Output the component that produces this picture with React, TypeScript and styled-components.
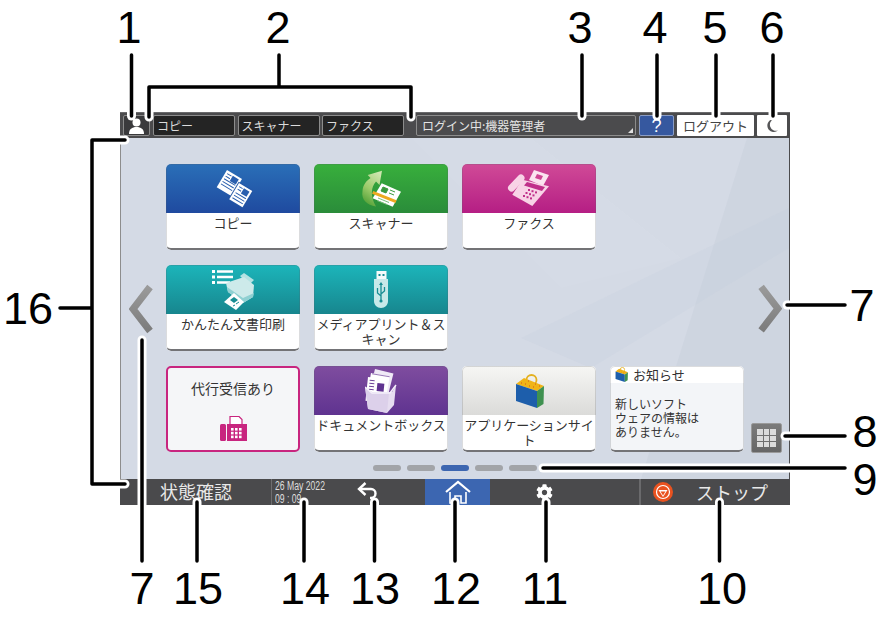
import React from "react";
import styled, { createGlobalStyle } from "styled-components";
import { FaCog } from "react-icons/fa";

const CJK = `"Noto Sans CJK JP", "Noto Sans", sans-serif`;

const Global = createGlobalStyle`
  html, body { margin: 0; padding: 0; background: #fff; }
  body { font-family: ${CJK}; }
`;

const Stage = styled.div`
  position: relative;
  width: 885px;
  height: 621px;
  overflow: hidden;
  background: #fff;
  padding: 112px 0 0 120px;
  box-sizing: border-box;
`;

const Screen = styled.div`
  width: 670px;
  height: 393px;
  display: flex;
  flex-direction: column;
`;

const TopBar = styled.div`
  height: 26px;
  flex: none;
  background: #4b4b4d;
  border-top: 1px solid #6a6a6c;
  box-sizing: border-box;
  padding: 2px 3px 2px 3px;
  display: flex;
  align-items: stretch;
`;

const UserBox = styled.div`
  width: 27px;
  box-sizing: border-box;
  background: #3a3a3c;
  border: 1px solid #8a8a8a;
  border-radius: 2px;
  display: flex;
  align-items: center;
  justify-content: center;
  margin-right: 3px;
`;

const Tab = styled.div`
  width: 82px;
  box-sizing: border-box;
  margin-right: 2.5px;
  background: #242424;
  border: 1px solid #8c8c8c;
  border-radius: 2px;
  color: #dcdcdc;
  font-size: 12px;
  line-height: 19px;
  padding-left: 3px;
`;

const Login = styled.div`
  position: relative;
  width: 220px;
  margin-left: 9.5px;
  margin-right: 3px;
  box-sizing: border-box;
  background: #4b4b4d;
  border: 1px solid #8c8c8c;
  border-radius: 2px;
  color: #e4e4e4;
  font-size: 12px;
  line-height: 19px;
  padding-left: 5px;
  &::after {
    content: "";
    position: absolute;
    right: 2px;
    bottom: 2px;
    border-style: solid;
    border-width: 0 0 5px 5px;
    border-color: transparent transparent #e0e0e0 transparent;
  }
`;

const Help = styled.div`
  width: 35px;
  margin-right: 3px;
  box-sizing: border-box;
  background: #36589f;
  border: 1px solid #8a9cc4;
  border-radius: 2px;
  color: #fff;
  font: 18px/20px "Liberation Sans", sans-serif;
  text-align: center;
`;

const Logout = styled.div`
  width: 77px;
  margin-right: 3px;
  background: #fff;
  color: #444;
  font-size: 13px;
  line-height: 21px;
  text-align: center;
  border-radius: 1px;
`;

const Moon = styled.div`
  width: 30px;
  background: #fff;
  border-radius: 1px;
  display: flex;
  align-items: center;
  justify-content: center;
`;

const Main = styled.div`
  position: relative;
  flex: 1;
  min-height: 0;
  background: #d4dae5;
  border-left: 1px solid #8d8d8d;
  border-right: 1px solid #4b4b4d;
  box-sizing: border-box;
  display: flex;
  flex-direction: column;
`;

const Backdrop = styled.svg`
  position: absolute;
  left: 0;
  top: 0;
`;

const Content = styled.div`
  position: relative;
  display: flex;
  height: 315px;
`;

const LeftRail = styled.div`
  width: 45px;
  padding: 146px 0 0 8px;
  box-sizing: border-box;
`;

const TileGrid = styled.div`
  width: 578px;
  padding-top: 26px;
  box-sizing: border-box;
  display: grid;
  grid-template-columns: repeat(4, 134px);
  grid-auto-rows: 86px;
  gap: 15px 14px;
`;

const RightRail = styled.div`
  width: 45px;
  box-sizing: border-box;
  padding: 146px 0 0 11px;
  display: flex;
  flex-direction: column;
`;

const GridButton = styled.div`
  width: 31px;
  height: 30px;
  margin: 90px 0 0 -4px;
  box-sizing: border-box;
  padding: 5px;
  background: linear-gradient(#7b7b7b, #666);
  border: 1px solid #9a9a9a;
  border-radius: 2px;
  display: grid;
  grid-template-columns: repeat(3, 1fr);
  grid-template-rows: repeat(3, 1fr);
  gap: 1px;
`;

const GridCell = styled.span`
  background: #dcdcdc;
`;

const Tile = styled.div`
  position: relative;
  background: #fff;
  border-radius: 5px;
  overflow: hidden;
  display: flex;
  flex-direction: column;
  &::after {
    content: "";
    position: absolute;
    inset: 0;
    border-radius: 5px;
    border: 1px solid rgba(90, 95, 105, 0.22);
    border-bottom: 2px solid #737376;
  }
`;

const TileHead = styled.div<{ $from: string; $to: string }>`
  height: 49px;
  flex: none;
  background: linear-gradient(${(p) => p.$from}, ${(p) => p.$to});
  display: flex;
  align-items: center;
  justify-content: center;
`;

const TileLabel = styled.div`
  padding: 2px 0 0;
  color: #333;
  font-size: 13px;
  line-height: 15px;
  text-align: center;
`;

const ProxyTile = styled(Tile)`
  box-sizing: border-box;
  background: #f5f6f8;
  border: 2px solid #c8257f;
  align-items: center;
  color: #333;
  font-size: 14px;
  line-height: 18px;
  padding-top: 11px;
  gap: 19px;
  &::after {
    border: none;
  }
`;

const NoticeTile = styled(Tile)`
  background: #f3f5f8;
  color: #333;
`;

const NoticeHead = styled.div`
  height: 17px;
  background: #fff;
  display: flex;
  align-items: center;
  gap: 5px;
  padding-left: 5px;
  font-size: 13px;
  line-height: 16px;
`;

const NoticeBody = styled.div`
  padding: 14px 0 0 5px;
  font-size: 12px;
  line-height: 14px;
`;

const Pager = styled.div`
  position: relative;
  display: flex;
  justify-content: center;
  gap: 6px;
  margin-top: 12px;
`;

const Dot = styled.span<{ $on?: boolean }>`
  width: 28px;
  height: 6px;
  border-radius: 3px;
  background: ${(p) => (p.$on ? "#3d66b0" : "#a2a4a8")};
`;

const BottomBar = styled.div`
  height: 26px;
  flex: none;
  background: #4a4a4c;
  display: flex;
  align-items: stretch;
  color: #e8e8e8;
`;

const BarPad = styled.div`
  width: 28px;
`;

const StatusCell = styled.div`
  width: 123px;
  box-sizing: border-box;
  padding-left: 12px;
  font-size: 18px;
  line-height: 25px;
`;

const DateCell = styled.div`
  width: 50px;
  box-sizing: border-box;
  padding: 1px 0 0 3px;
  border-left: 1px solid #6e6e70;
  white-space: nowrap;
  color: #dedede;
`;

const DateText = styled.div`
  font: 12px/13px "Liberation Sans", sans-serif;
  transform: scaleX(0.72);
  transform-origin: left top;
`;

const BackCell = styled.div`
  width: 104px;
  display: flex;
  align-items: center;
  justify-content: center;
  padding-right: 10px;
  box-sizing: border-box;
`;

const HomeCell = styled.div`
  width: 65px;
  background: #3c66b1;
  display: flex;
  align-items: center;
  justify-content: center;
`;

const SettingsCell = styled.div`
  width: 149px;
  box-sizing: border-box;
  padding-left: 46px;
  display: flex;
  align-items: center;
`;

const StopCell = styled.div`
  flex: 1;
  box-sizing: border-box;
  border-left: 2px solid #6a6a6c;
  padding-left: 12px;
  display: flex;
  align-items: center;
  gap: 23px;
  font-size: 18px;
  line-height: 25px;
`;

const Overlay = styled.svg`
  position: absolute;
  left: 0;
  top: 0;
  pointer-events: none;
`;

const Num = styled.div<{ $x: number; $y: number }>`
  position: absolute;
  left: ${(p) => p.$x}px;
  top: ${(p) => p.$y}px;
  transform: translate(-50%, -50%);
  font: 45px/45px "Liberation Sans", Arial, sans-serif;
  color: #000;
`;

const CopyIcon = () => (
  <svg width="40" height="38" viewBox="0 0 40 38">
    <g transform="translate(14 0) rotate(31)">
      <rect width="17.5" height="20" fill="#fff" />
      <rect x="8" y="2" width="7" height="6" fill="#2a5fae" />
      <path d="M2 3h5M2 6h5M2 9h13M2 12h13M2 15h13" stroke="#2a5fae" strokeWidth="1" />
    </g>
    <g transform="translate(26 13) rotate(31)">
      <rect x="-1" y="-1" width="17.5" height="21" fill="#2356a5" />
      <rect width="15.5" height="19" fill="#fff" />
      <rect x="7" y="2" width="6.5" height="6" fill="#2a5fae" />
      <path d="M2 3h4M2 6h4M2 10h12M2 13h12M2 16h12" stroke="#2a5fae" strokeWidth="1" />
    </g>
  </svg>
);

const ScanIcon = () => (
  <svg width="40" height="38" viewBox="0 0 40 38">
    <defs>
      <linearGradient id="arr" x1="0.7" y1="0" x2="0.3" y2="1">
        <stop offset="0" stopColor="#cfe6b0" />
        <stop offset="0.55" stopColor="#9ccb6a" />
        <stop offset="1" stopColor="#4f9f35" />
      </linearGradient>
    </defs>
    <path d="M21 .7 18.500 15 15 11.500C10 17 9 26 15 36.500 6 35 0 30 1.500 21 2 15 5 11 9.500 8L6.700 5Z" fill="url(#arr)" />
    <polygon points="20.700,13.300 40,21.700 31.700,36.700 11.700,28.300" fill="#fff" />
    <path d="M22 17l5 2-2 4-5-2zM29 20l5 2M28 23l5 2" stroke="#3a9a3e" strokeWidth="1" fill="#3a9a3e" />
    <path d="M17 28l11 4.500M16 30.500l10 4" stroke="#7cc07c" strokeWidth="1" />
    <path d="M11.700 22.300 35 31.700" stroke="#eda91f" strokeWidth="3" />
  </svg>
);

const FaxIcon = () => (
  <svg width="45" height="37" viewBox="0 0 45 37">
    <polygon points="27,0 42,5 36,16 22,10" fill="#fbe4f0" />
    <path d="M30 4l6 2-2 4-6-2z" fill="#cf4593" />
    <polygon points="15.300,9.700 42,16.300 25.300,36 5.300,24.700" fill="#f8d3e6" />
    <path d="M4.500 18 14 8" stroke="#f8d3e6" strokeWidth="7" strokeLinecap="round" />
    <polygon points="20,12 38,17 35,21 17,15.500" fill="#c0308a" />
    <g fill="#c0308a">
      {[0, 1, 2].flatMap((r) =>
        [0, 1, 2].map((c) => (
          <rect key={`${r}${c}`} x={21 + c * 3.5 - r * 2.5} y={19 + c * 1.2 + r * 3} width="2" height="2" />
        ))
      )}
    </g>
  </svg>
);

const PrintIcon = () => (
  <svg width="45" height="43" viewBox="0 0 45 43">
    <path d="M1 2h3v3H1zM1 7.500h3v3H1zM1 13h3v3H1z" fill="#fff" />
    <path d="M6 3.500h16M6 9h16M6 14.500h13" stroke="#fff" strokeWidth="2.500" />
    <polygon points="29,8 33,5 43,12 38,17" fill="#b4e2e2" />
    <polygon points="15,15 33,9 43,17 42,29 32,35 17,24" fill="#cdeaea" />
    <polygon points="17,24 32,35 42,29 43,25 32,30 16,19" fill="#8fd0d2" />
    <polygon points="13,34 23,25 33,34 25,42" fill="#fff" />
    <path d="M19 32l4-3 4 3-4 3z" fill="#178d93" />
    <path d="M25 36l3-2M22 38l2-1" stroke="#178d93" strokeWidth="1" />
  </svg>
);

const UsbIcon = () => (
  <svg width="14" height="37" viewBox="0 0 14 37">
    <rect x="2.500" y="0" width="10" height="9" fill="#f4fafa" />
    <rect x="4.500" y="3" width="2" height="2" fill="#178d93" />
    <rect x="8.500" y="3" width="2" height="2" fill="#178d93" />
    <path d="M0 8h14v22c0 4-3 7-7 7s-7-3-7-7z" fill="#c7e9e9" />
    <path d="M7 13v17M3.500 17v5l3.500 3M10.500 16v4l-3.500 3" stroke="#178d93" strokeWidth="1.300" fill="none" />
    <path d="M7 11l2 3H5z" fill="#178d93" />
    <circle cx="7" cy="30" r="1.600" fill="#178d93" />
  </svg>
);

const BoxIcon = () => (
  <svg width="32" height="44" viewBox="0 0 32 44">
    <g transform="translate(10 0) rotate(14)">
      <rect width="19" height="22" fill="#efe9f6" />
    </g>
    <g transform="translate(6 4) rotate(10)">
      <rect width="19" height="24" fill="#fff" />
      <rect x="1" width="18" height="1" fill="#9a7bb9" />
    </g>
    <g transform="translate(3 8) rotate(6)">
      <rect width="19" height="24" fill="#fff" />
      <rect x="10" y="5" width="7" height="8" fill="#5f3390" />
      <path d="M2 3h5M2 6h5M2 9h5M2 12h5" stroke="#6f4699" strokeWidth="1" />
    </g>
    <polygon points="0,18 8,24 27,23 31,16 29,36 22,44 3,40" fill="#e6ddf0" />
    <polygon points="0,18 7,23 24,24 22,44 3,40" fill="#dcd0ea" />
    <path d="M0 18l7 6h18l6-8" stroke="#f4effa" strokeWidth="1.500" fill="none" />
  </svg>
);

const BagIcon = ({ w, h }: { w: number; h: number }) => (
  <svg width={w} height={h} viewBox="0 0 29 34">
    <ellipse cx="16.500" cy="6" rx="5" ry="5" fill="none" stroke="#e3b020" strokeWidth="1.800" />
    <polygon points="1,10 9,4 29,12 22,17" fill="#f0b416" />
    <path d="M6 9h1M10 10h1M14 12h1M18 13h1M13 7h1M20 10h1M24 12h1" stroke="#d3541f" strokeWidth="1.200" />
    <polygon points="1,10 22,17 22,34 1,27" fill="#1d5eab" />
    <polygon points="22,17 29,12 28.500,30 22,34" fill="#3f9150" />
  </svg>
);

const ProxyFaxIcon = () => (
  <svg width="27" height="26" viewBox="0 0 27 26">
    <rect x="0" y="8" width="6" height="17" rx="1.500" fill="#c8257f" />
    <path d="M10 .5h9l3 3V9H10z" fill="#fff" stroke="#c8257f" strokeWidth="1.200" />
    <path d="M7 8h20v17H7z" fill="#c8257f" />
    <g fill="#fff">
      {[0, 1, 2].flatMap((r) =>
        [0, 1, 2].map((c) => <rect key={`${r}${c}`} x={11 + c * 4} y={12 + r * 3.8} width="2.600" height="2.600" />)
      )}
    </g>
  </svg>
);

const Chevron = ({ dir }: { dir: "l" | "r" }) => (
  <svg width="27" height="50" viewBox="0 0 27 50">
    <defs>
      <linearGradient id={`chev${dir}`} x1="0" y1="0" x2="0" y2="1">
        <stop offset="0" stopColor="#9a9a9a" />
        <stop offset="1" stopColor="#7c7c7c" />
      </linearGradient>
    </defs>
    <path
      d={dir === "l" ? "M21 3 4 25l17 22" : "M6 3l17 22L6 47"}
      fill="none"
      stroke={`url(#chev${dir})`}
      strokeWidth="7"
    />
  </svg>
);

const lines = [
  "M131.500 55V116",
  "M279 55V87M149 117V87H411V117",
  "M582 55V116",
  "M657 55V116",
  "M716 55V116",
  "M773 55V116",
  "M60 308H92M125 140H92V484H125",
  "M142 340V561",
  "M197 502V561",
  "M304 502V561",
  "M374.500 502V561",
  "M455 502V561",
  "M546 502V561",
  "M719.500 502V561",
  "M787 305H845",
  "M785 436H845",
  "M543 468H845",
];

const nums: [string, number, number][] = [
  ["1", 129, 27], ["2", 278, 27], ["3", 580, 27], ["4", 655, 27], ["5", 715, 27], ["6", 772, 27],
  ["16", 28, 308], ["7", 142, 588], ["15", 198, 588], ["14", 305, 588], ["13", 375, 588],
  ["12", 456, 588], ["11", 545, 588], ["10", 722, 588], ["7", 862, 305], ["8", 865, 431], ["9", 865, 479],
];

const EmptySlot = styled.div``;

const ColorTile = ({ label, from, to, icon }: { label: string; from: string; to: string; icon: React.ReactNode }) => (
  <Tile>
    <TileHead $from={from} $to={to}>{icon}</TileHead>
    <TileLabel>{label}</TileLabel>
  </Tile>
);

export default function App() {
  return (
    <Stage>
      <Global />
      <Screen>
        <TopBar>
          <UserBox>
            <svg width="15" height="16" viewBox="0 0 15 16">
              <circle cx="7.500" cy="4.500" r="4" fill="#fff" />
              <path d="M0 16c0-5 3-7 7.500-7S15 11 15 16z" fill="#fff" />
            </svg>
          </UserBox>
          <Tab>コピー</Tab>
          <Tab>スキャナー</Tab>
          <Tab>ファクス</Tab>
          <Login>ログイン中:機器管理者</Login>
          <Help>?</Help>
          <Logout>ログアウト</Logout>
          <Moon>
            <svg width="11" height="13" viewBox="0 0 11 13">
              <path d="M7 0A6.500 6.500 0 1 0 11 11.500 6 6 0 0 1 7 0z" fill="#555557" />
            </svg>
          </Moon>
        </TopBar>
        <Main>
          <Backdrop width="668" height="341" viewBox="0 0 668 341">
            <polygon points="626,0 668,0 668,341 520,341" fill="#b9c3d3" opacity="0.22" />
            <polygon points="400,200 668,70 668,110 470,230" fill="#c4ccdb" opacity="0.2" />
            <polygon points="290,0 410,0 560,120 440,150" fill="#dfe4ed" opacity="0.18" />
          </Backdrop>
          <Content>
            <LeftRail>
              <Chevron dir="l" />
            </LeftRail>
            <TileGrid>
              <ColorTile label="コピー" from="#2a6fb8" to="#1f4a9f" icon={<CopyIcon />} />
              <ColorTile label="スキャナー" from="#38af3c" to="#2a8c3a" icon={<ScanIcon />} />
              <ColorTile label="ファクス" from="#d04a97" to="#b51e84" icon={<FaxIcon />} />
              <EmptySlot />
              <ColorTile label="かんたん文書印刷" from="#1cb5ba" to="#17868e" icon={<PrintIcon />} />
              <ColorTile label="メディアプリント＆スキャン" from="#1cb5ba" to="#17868e" icon={<UsbIcon />} />
              <EmptySlot />
              <EmptySlot />
              <ProxyTile>
                <span>代行受信あり</span>
                <ProxyFaxIcon />
              </ProxyTile>
              <ColorTile label="ドキュメントボックス" from="#7f4d9f" to="#5f3390" icon={<BoxIcon />} />
              <ColorTile label="アプリケーションサイト" from="#f6f6f4" to="#dbdbd9" icon={<BagIcon w={29} h={34} />} />
              <NoticeTile>
                <NoticeHead>
                  <BagIcon w={13} h={15} />
                  お知らせ
                </NoticeHead>
                <NoticeBody>
                  新しいソフト
                  <br />
                  ウェアの情報は
                  <br />
                  ありません。
                </NoticeBody>
              </NoticeTile>
            </TileGrid>
            <RightRail>
              <Chevron dir="r" />
              <GridButton>
                {Array.from({ length: 9 }, (_, i) => (
                  <GridCell key={i} />
                ))}
              </GridButton>
            </RightRail>
          </Content>
          <Pager>
            <Dot />
            <Dot />
            <Dot $on />
            <Dot />
            <Dot />
          </Pager>
        </Main>
        <BottomBar>
          <BarPad />
          <StatusCell>状態確認</StatusCell>
          <DateCell>
            <DateText>
              26 May 2022
              <br />
              09 : 09
            </DateText>
          </DateCell>
          <BackCell>
            <svg width="22" height="22" viewBox="0 0 22 22">
              <path d="M2 8h12a4.500 4.500 0 0 1 0 9h-1" fill="none" stroke="#fff" strokeWidth="2.400" />
              <path d="M8.500 2 2 8l6.500 6" fill="none" stroke="#fff" strokeWidth="2.400" />
            </svg>
          </BackCell>
          <HomeCell>
            <svg width="26" height="24" viewBox="0 0 26 24">
              <path d="M1 12 13 2l12 10" fill="none" stroke="#fff" strokeWidth="2.200" />
              <path d="M5 12v11h5v-7h6v7h5V12" fill="none" stroke="#fff" strokeWidth="1.600" />
            </svg>
          </HomeCell>
          <SettingsCell>
            <FaCog size={17} color="#fff" />
          </SettingsCell>
          <StopCell>
            <svg width="20" height="20" viewBox="0 0 20 20">
              <circle cx="10" cy="10" r="10" fill="#e9521f" />
              <circle cx="10" cy="10" r="6.500" fill="none" stroke="#fff" strokeWidth="1.200" />
              <path d="M5.500 8h9L10 15z" fill="#fff" />
              <path d="M7.500 9.500h5L10 13.500z" fill="#e9521f" />
            </svg>
            <span>ストップ</span>
          </StopCell>
        </BottomBar>
      </Screen>
      <Overlay width="885" height="621" viewBox="0 0 885 621">
        {lines.map((d) => (
          <path key={d} d={d} fill="none" stroke="#fff" strokeWidth="9" strokeLinecap="round" strokeLinejoin="round" />
        ))}
        {lines.map((d) => (
          <path key={`b${d}`} d={d} fill="none" stroke="#000" strokeWidth="3.500" strokeLinecap="round" strokeLinejoin="round" />
        ))}
      </Overlay>
      {nums.map(([n, x, y]) => (
        <Num key={`${n}-${x}`} $x={x} $y={y}>{n}</Num>
      ))}
    </Stage>
  );
}
